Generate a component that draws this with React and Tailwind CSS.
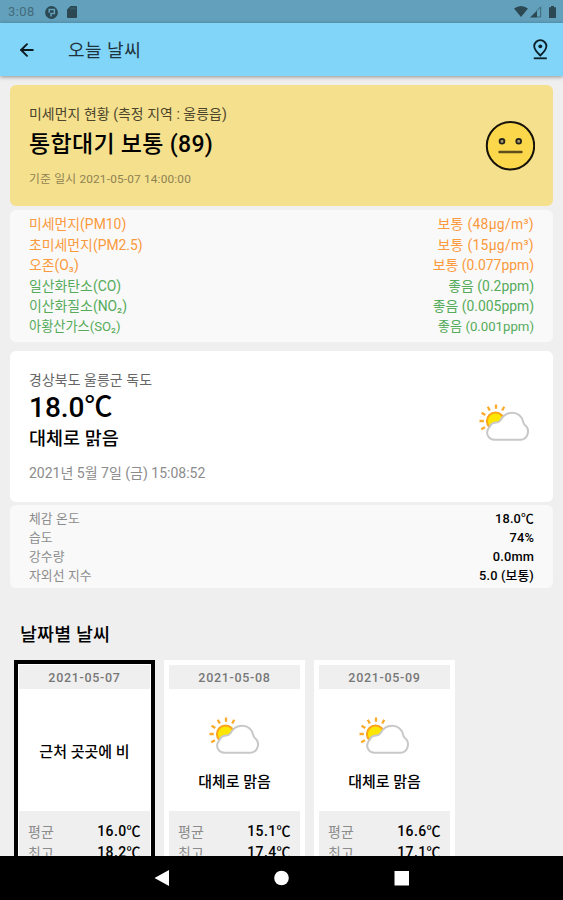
import { ArrowLeft } from 'lucide-react';

const POLLUTANTS = [
  { name: '미세먼지(PM10)', value: '보통 (48μg/m³)', tone: 'text-[#fb9a3c]', wide: true },
  { name: '초미세먼지(PM2.5)', value: '보통 (15μg/m³)', tone: 'text-[#fb9a3c]', wide: true },
  { name: '오존(O₃)', value: '보통 (0.077ppm)', tone: 'text-[#fb9a3c]' },
  { name: '일산화탄소(CO)', value: '좋음 (0.2ppm)', tone: 'text-[#55ab59]' },
  { name: '이산화질소(NO₂)', value: '좋음 (0.005ppm)', tone: 'text-[#55ab59]' },
  { name: '아황산가스(SO₂)', value: '좋음 (0.001ppm)', tone: 'text-[#55ab59]', small: true },
];

const DETAILS = [
  ['체감 온도', '18.0℃'],
  ['습도', '74%'],
  ['강수량', '0.0mm'],
  ['자외선 지수', '5.0 (보통)'],
];

const DAYS = [
  { date: '2021-05-07', label: '근처 곳곳에 비', avg: '16.0℃', high: '18.2℃', selected: true },
  { date: '2021-05-08', label: '대체로 맑음', avg: '15.1℃', high: '17.4℃', icon: true },
  { date: '2021-05-09', label: '대체로 맑음', avg: '16.6℃', high: '17.1℃', icon: true },
];

function PartlyCloudy() {
  return (
    <svg width="52" height="38" viewBox="0 0 52 38" fill="none">
      <g stroke="#fbaa2b" strokeWidth="2.300">
        <path d="M17 .5v4.300M8.800 2.800l2 3.700M25.200 2.800l-2 3.700M2.600 8.700l3.700 2.300M.5 17h4.300M2.200 25.300l3.800-2" />
      </g>
      <circle cx="16.500" cy="17" r="8.600" fill="#ffe600" stroke="#fba41c" strokeWidth="2" />
      <path
        d="M15.500 35.800a7.200 7.200 0 0 1-6.600-10.300c.5-1.100 1.300-1.900 1.800-3 1.300-2.600 3.700-4 6.600-4 1.700 0 3-.6 4-2C23.700 12 28.100 8.800 33.100 8.800c6 0 10.400 4 11.200 9.600.1 1 .6 1.700 1.300 2.300A8.400 8.400 0 0 1 41.500 35.800z"
        fill="#fff"
        stroke="#c8c8c8"
        strokeWidth="2"
      />
    </svg>
  );
}

function NeutralFace() {
  return (
    <svg width="50" height="50" viewBox="0 0 50 50" fill="none">
      <circle cx="25.500" cy="24.800" r="23.700" fill="#fbd74b" stroke="#15120a" strokeWidth="2" />
      <circle cx="17" cy="20.300" r="2.400" fill="#a59a70" stroke="#26231a" strokeWidth="1.800" />
      <circle cx="33.700" cy="20.300" r="2.400" fill="#a59a70" stroke="#26231a" strokeWidth="1.800" />
      <path d="M14.500 31h22" stroke="#5d4e1b" strokeWidth="2.400" strokeLinecap="round" />
    </svg>
  );
}

function StatusBar() {
  return (
    <div className="h-[23px] shrink-0 bg-[#62a0bc] flex items-center justify-between pl-2 pr-[7px] text-[#2b4853]">
      <div className="flex items-center">
        <span className="w-9 text-[13px] leading-4 tracking-[0.400px] text-[#456b7b]">3:08</span>
        <svg className="mt-[1px] ml-[1px]" width="13" height="13" viewBox="0 0 13 13">
          <circle cx="6.500" cy="6.500" r="6.400" fill="#2b4853" />
          <path d="M6 10.500V7.400h3.400V3.600H4.200v3.200" fill="none" stroke="#62a0bc" strokeWidth="1.500" />
        </svg>
        <svg className="mt-[1px] ml-[9px]" width="10" height="12" viewBox="0 0 10 12">
          <path d="M3.500 0H9a1 1 0 0 1 1 1v10a1 1 0 0 1-1 1H1a1 1 0 0 1-1-1V3.500z" fill="#2b4853" />
          <path d="M4 1.500v2M6 1.500v2M8 1.500v2" stroke="#477486" strokeWidth=".8" />
        </svg>
      </div>
      <div className="flex items-center">
        <svg width="14" height="11" viewBox="0 0 14 11">
          <path d="M0 2.500Q7-2.500 14 2.500L7 11z" fill="#2b4853" />
        </svg>
        <svg className="ml-[2px]" width="12" height="12" viewBox="0 0 12 12">
          <path d="M0 11.500 7 4.500v7z" fill="#2b4853" />
          <path d="M7 4.500l3.700-3.700v10.200H7" fill="none" stroke="#3f6676" strokeWidth="1" />
        </svg>
        <svg className="ml-[7px]" width="7" height="12" viewBox="0 0 7 12">
          <path d="M2 0h3v1.200h2V12H0V1.200h2z" fill="#2b4853" />
        </svg>
      </div>
    </div>
  );
}

function DayCard({ day }) {
  return (
    <div
      className={`w-[141px] h-[240px] shrink-0 flex flex-col border-[4px] bg-white px-[1px] pt-[1px] ${
        day.selected ? 'border-black' : 'border-white'
      }`}
    >
      <div className="h-[24px] shrink-0 bg-[#efefef] text-center text-[12.500px] leading-[25px] tracking-[0.700px] font-medium text-[#777]">
        {day.date}
      </div>
      <div className="h-[122px] shrink-0 flex flex-col items-center justify-center pt-[3px]">
        {day.icon && <div className="mb-[17px] mt-[6px]"><PartlyCloudy /></div>}
        <div className="text-[15px] leading-5 font-medium text-black">{day.label}</div>
      </div>
      <div className="flex-1 bg-[#efefef] px-[9px] pt-[10px]">
        {[['평균', day.avg], ['최고', day.high]].map(([name, value]) => (
          <div key={name} className="h-[21px] flex justify-between leading-[20px]">
            <span className="text-[14px] pt-[1px] text-[#8c8c8c]">{name}</span>
            <span className="text-[14px] tracking-[0.400px] font-medium text-black">{value}</span>
          </div>
        ))}
      </div>
    </div>
  );
}

export default function App() {
  return (
    <div className="w-[563px] h-[900px] flex flex-col overflow-hidden bg-[#efefef] font-['Roboto','Noto_Sans_CJK_KR',sans-serif]">
      <StatusBar />
      <header className="relative h-[53px] shrink-0 flex items-center bg-[#80d5f9] pl-[17px] pr-[14px] shadow-[0_1px_4px_rgba(0,0,0,0.4)]">
        <ArrowLeft size={20} strokeWidth={2.300} className="text-[#0d1b20]" />
        <h1 className="ml-[31px] pt-[2px] text-[18px] leading-6 tracking-[0.500px] text-[#1e333c]">오늘 날씨</h1>
        <svg className="ml-auto" width="18" height="22" viewBox="0 0 18 22" fill="none" stroke="#0d2028" strokeWidth="1.800">
          <path d="M9.300 16.500C5.300 12.800 3.200 10 3.200 7.300a6.100 6.100 0 0 1 12.200 0c0 2.700-2.100 5.500-6.100 9.200z" />
          <circle cx="9.300" cy="7.300" r="1.900" fill="#0d2028" stroke="none" />
          <path d="M2.800 19.300h13" />
        </svg>
      </header>

      <main className="flex-1 min-h-0 overflow-hidden px-[10px] pt-[9px]">
        <section className="h-[121px] rounded-[6px] bg-[#f5e08e] flex items-center justify-between pl-[19px] pr-[18px]">
          <div>
            <div className="text-[13.900px] leading-[20px] tracking-[0.070px] text-[#4c452c]">미세먼지 현황 (측정 지역 : 울릉읍)</div>
            <div className="mt-[6px] text-[23px] leading-[30px] tracking-[0.300px] font-medium text-black">통합대기 보통 (89)</div>
            <div className="mt-[11px] text-[11.800px] leading-[16px] tracking-[0.190px] text-[#8e8252]">기준 일시 2021-05-07 14:00:00</div>
          </div>
          <NeutralFace />
        </section>

        <section className="mt-[4px] h-[132px] rounded-[6px] bg-[#f9f9f9] px-[19px] pt-[4px]">
          {POLLUTANTS.map(p => (
            <div
              key={p.name}
              className={`h-[20.500px] flex justify-between leading-[20.500px] ${p.small ? 'text-[13.200px]' : 'text-[13.900px]'} ${p.tone}`}
            >
              <span>{p.name}</span>
              <span className={p.wide ? 'tracking-[0.300px]' : ''}>{p.value}</span>
            </div>
          ))}
        </section>

        <section className="mt-[9px] h-[151px] rounded-[6px] bg-white flex items-center justify-between pl-[19px] pr-[22px]">
          <div>
            <div className="text-[13.900px] leading-[20px] tracking-[0.100px] text-[#666]">경상북도 울릉군 독도</div>
            <div className="mt-[2px] text-[28px] leading-[32px] font-medium text-black">18.0℃</div>
            <div className="mt-[2px] text-[18.500px] leading-[26px] font-medium text-black">대체로 맑음</div>
            <div className="mt-[11px] mb-[1px] text-[14px] leading-[20px] text-[#8c8c8c]">2021년 5월 7일 (금) 15:08:52</div>
          </div>
          <div className="pb-[8px]"><PartlyCloudy /></div>
        </section>

        <section className="mt-[3px] h-[83px] rounded-[6px] bg-[#f9f9f9] px-[19px] pt-[4px]">
          {DETAILS.map(([name, value]) => (
            <div key={name} className="h-[19px] flex justify-between text-[12.800px] leading-[19px]">
              <span className="tracking-[0.100px] text-[#8c8c8c]">{name}</span>
              <span className="tracking-[0.150px] font-medium text-black">{value}</span>
            </div>
          ))}
        </section>

        <h2 className="mt-[34px] pl-[10px] text-[18.400px] leading-[26px] tracking-[0.150px] font-medium text-black">날짜별 날씨</h2>
        <div className="mt-[12px] pl-[4px] flex gap-[9px]">
          {DAYS.map(day => <DayCard key={day.date} day={day} />)}
        </div>
      </main>

      <nav className="h-[44px] shrink-0 bg-black flex items-center pl-[154px]">
        <svg width="255" height="18" viewBox="0 0 255 18" fill="#fff">
          <path d="M.5 9 15 1v16z" />
          <circle cx="127.500" cy="9" r="7.300" />
          <path d="M240.500 2H255v14.500h-14.500z" />
        </svg>
      </nav>
    </div>
  );
}
